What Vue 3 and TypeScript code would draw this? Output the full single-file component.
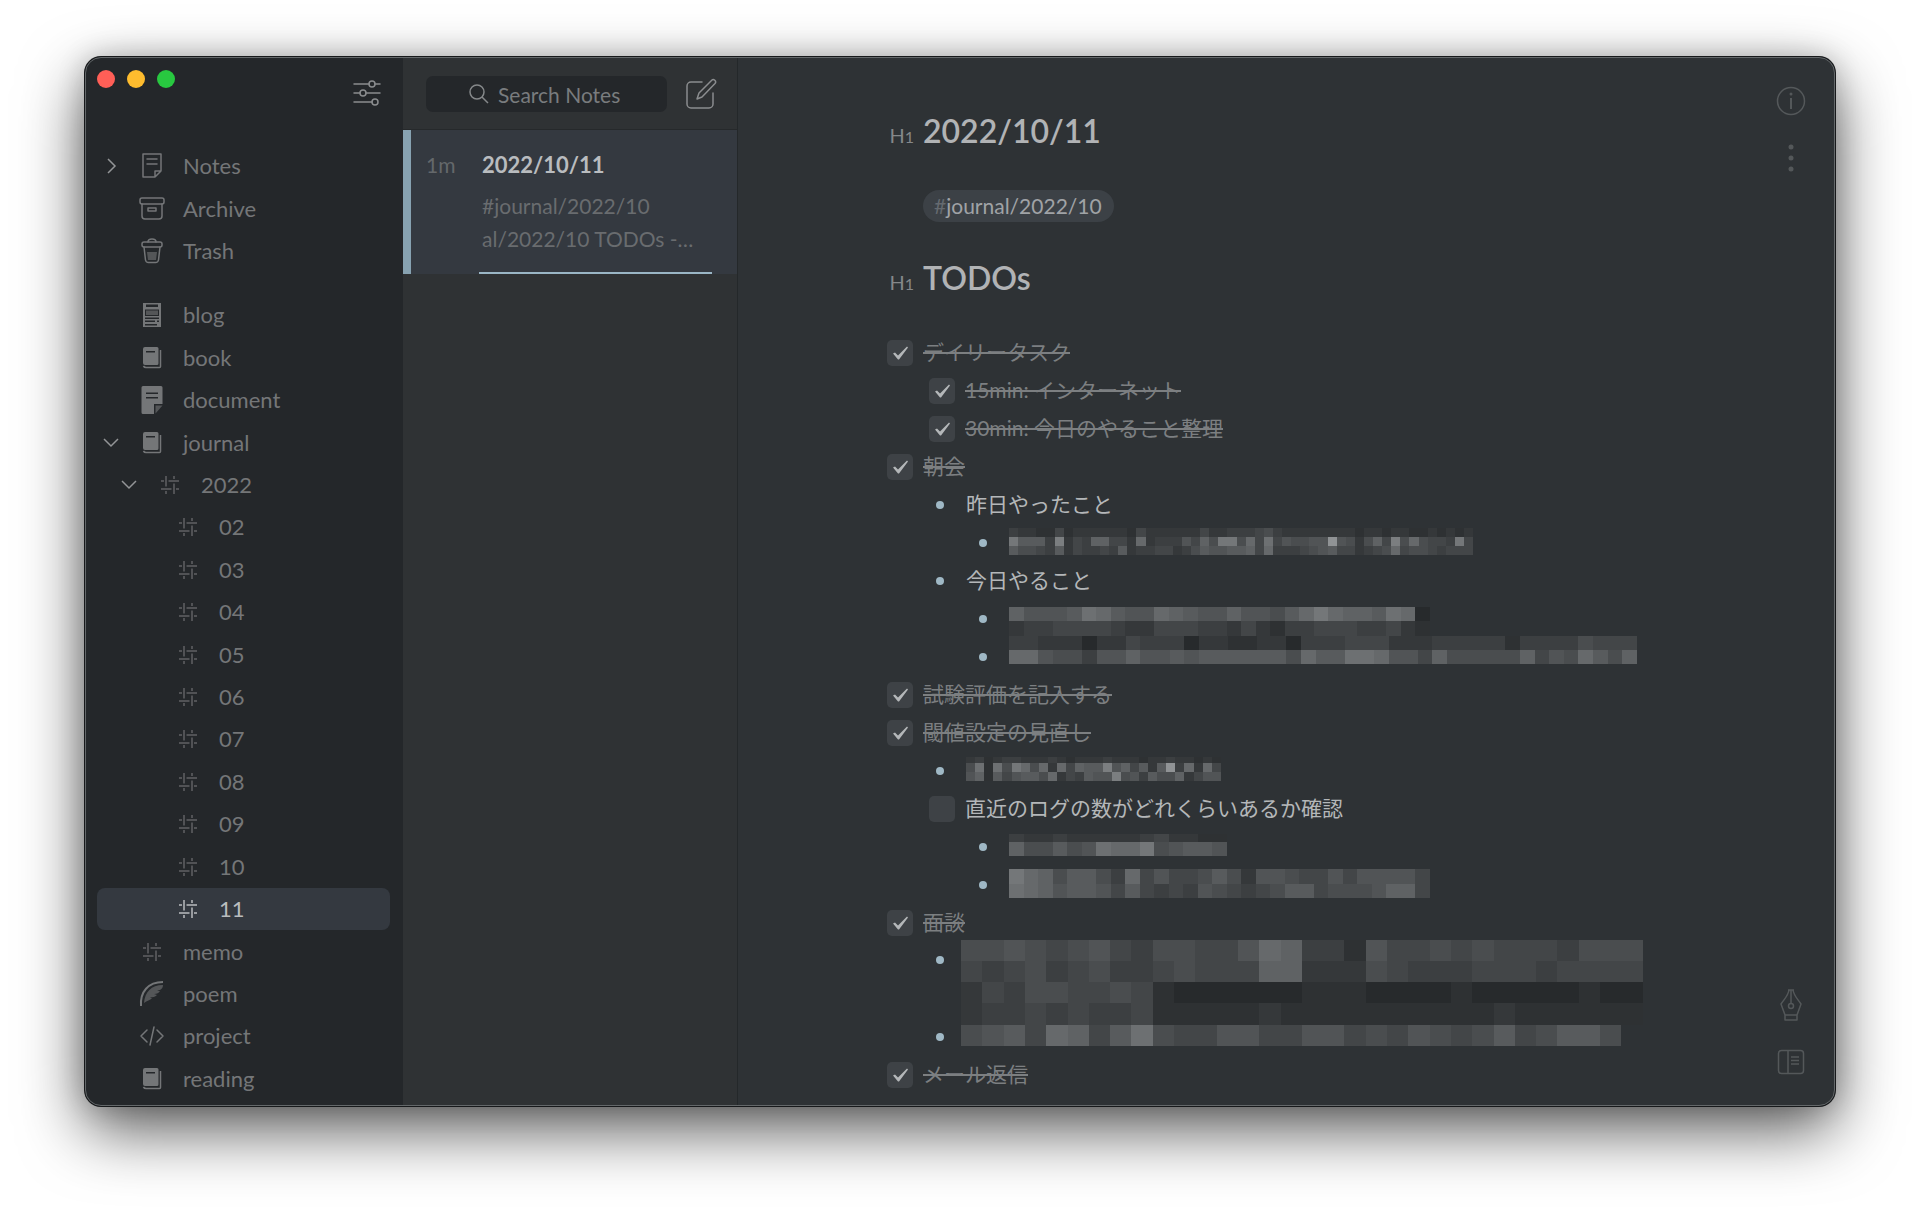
<script setup lang="ts">
import { ref } from 'vue'

type IconName = 'note' | 'archive' | 'trash' | 'blog' | 'book' | 'document' | 'hash' | 'feather' | 'code'

interface SidebarRow {
  label: string
  icon: IconName
  level: 0 | 1 | 2
  toggle?: 'open' | 'closed'
  selected?: boolean
}

interface MosaicBand {
  height: number
  cells: string
}

interface Mosaic {
  cell: number
  bands: MosaicBand[]
  align: 'end' | 'start' | 'center' | 'wide'
}

interface NoteLine {
  kind: 'todo' | 'bullet'
  level: 0 | 1 | 2
  text?: string
  done?: boolean
  mosaic?: Mosaic
  tall?: boolean
}

const systemRows: SidebarRow[] = [
  { label: 'Notes', icon: 'note', level: 0, toggle: 'closed' },
  { label: 'Archive', icon: 'archive', level: 0 },
  { label: 'Trash', icon: 'trash', level: 0 },
]

const months = ['02', '03', '04', '05', '06', '07', '08', '09', '10', '11']

const tagRows: SidebarRow[] = [
  { label: 'blog', icon: 'blog', level: 0 },
  { label: 'book', icon: 'book', level: 0 },
  { label: 'document', icon: 'document', level: 0 },
  { label: 'journal', icon: 'book', level: 0, toggle: 'open' },
  { label: '2022', icon: 'hash', level: 1, toggle: 'open' },
  ...months.map((m): SidebarRow => ({ label: m, icon: 'hash', level: 2, selected: m === '11' })),
  { label: 'memo', icon: 'hash', level: 0 },
  { label: 'poem', icon: 'feather', level: 0 },
  { label: 'project', icon: 'code', level: 0 },
  { label: 'reading', icon: 'book', level: 0 },
]

const sections = [
  { name: 'Library', rows: systemRows },
  { name: 'Tags', rows: tagRows },
]

const lines = ref<NoteLine[]>([
  { kind: 'todo', level: 0, text: 'デイリータスク', done: true },
  { kind: 'todo', level: 1, text: '15min: インターネット', done: true },
  { kind: 'todo', level: 1, text: '30min: 今日のやること整理', done: true },
  { kind: 'todo', level: 0, text: '朝会', done: true },
  { kind: 'bullet', level: 1, text: '昨日やったこと' },
  {
    kind: 'bullet',
    level: 2,
    mosaic: {
      cell: 9.1,
      align: 'center',
      bands: [
        { height: 9, cells: '322114122222214222222422333453222222221221221121212' },
        { height: 9, cells: 'b7773c24388442923336485bb594a465566f652584c595443b4' },
        { height: 9, cells: '755437243343723344235766778493334567442345945543444' },
      ],
    },
  },
  { kind: 'bullet', level: 1, text: '今日やること' },
  {
    kind: 'bullet',
    level: 2,
    mosaic: {
      cell: 14.5,
      align: 'end',
      bands: [
        { height: 14, cells: '86667a976698766866579b9887a90' },
        { height: 15, cells: '23344443224443324213344433421' },
      ],
    },
  },
  {
    kind: 'bullet',
    level: 2,
    mosaic: {
      cell: 14.6,
      align: 'start',
      bands: [
        { height: 14, cells: '3322202243330221122033344422233333133335444' },
        { height: 14, cells: '99655366866767777775977aa966485555584659758' },
      ],
    },
  },
  { kind: 'todo', level: 0, text: '試験評価を記入する', done: true },
  { kind: 'todo', level: 0, text: '閾値設定の見直し', done: true },
  {
    kind: 'bullet',
    level: 1,
    mosaic: {
      cell: 9.1,
      align: 'center',
      bands: [
        { height: 6, cells: '2312332223212223222122322121' },
        { height: 9, cells: '5a1a5b959294877c684727f39294' },
        { height: 9, cells: '6817467759243766c56375582466' },
      ],
    },
  },
  { kind: 'todo', level: 1, text: '直近のログの数がどれくらいあるか確認', done: false },
  {
    kind: 'bullet',
    level: 2,
    mosaic: {
      cell: 14.5,
      align: 'center',
      bands: [
        { height: 8, cells: '322322222342211' },
        { height: 14, cells: '855756a99b56776' },
      ],
    },
  },
  {
    kind: 'bullet',
    level: 2,
    mosaic: {
      cell: 14.5,
      align: 'center',
      bands: [
        { height: 15, cells: 'b9857753946445752665446466664' },
        { height: 14, cells: 'a9867764743436543457745556884' },
      ],
    },
  },
  { kind: 'todo', level: 0, text: '面談', done: true },
  {
    kind: 'bullet',
    level: 1,
    tall: true,
    mosaic: {
      cell: 21.3,
      align: 'wide',
      bands: [
        { height: 21, cells: '55654564355446983316445454443555' },
        { height: 21, cells: '43453453345444882225433344434444' },
        { height: 21, cells: '24355445410000001110000100000100' },
        { height: 22, cells: '23343433411111211111111112111111' },
      ],
    },
  },
  {
    kind: 'bullet',
    level: 1,
    mosaic: {
      cell: 21.3,
      align: 'wide',
      bands: [{ height: 21, cells: '56749847a5446644664546545745775' }],
    },
  },
  { kind: 'todo', level: 0, text: 'メール返信', done: true },
])

function shade(digit: string): string {
  const v = parseInt(digit, 16)
  const g = 39 + v * 7
  return `rgb(${g}, ${g + 3}, ${g + 5})`
}

function bandTop(bands: MosaicBand[], index: number): number {
  return bands.slice(0, index).reduce((sum, b) => sum + b.height, 0)
}

function mosaicWidth(m: Mosaic): number {
  return Math.round(m.cell * Math.max(...m.bands.map((b) => b.cells.length)))
}

function mosaicHeight(m: Mosaic): number {
  return bandTop(m.bands, m.bands.length)
}
</script>

<template>
  <div class="desktop">
    <main class="window">
      <aside class="sidebar">
        <header class="sidebar-head">
          <div class="lights">
            <button class="light light-close" aria-label="Close"></button>
            <button class="light light-min" aria-label="Minimize"></button>
            <button class="light light-max" aria-label="Zoom"></button>
          </div>
          <button class="icon-button" aria-label="Preferences">
            <svg width="28" height="28" viewBox="0 0 28 28" class="line-icon">
              <path d="M1 5h15M22 5h5M1 14h6M13 14h14M1 23h18" />
              <circle cx="19" cy="5" r="3" />
              <circle cx="10" cy="14" r="3" />
              <circle cx="22" cy="23" r="3" />
            </svg>
          </button>
        </header>
        <nav class="tree" aria-label="Tags">
          <template v-for="section in sections" :key="section.name">
            <div v-for="row in section.rows" :key="row.label" class="row" :class="['level-' + row.level, { selected: row.selected }]">
              <button v-if="row.toggle" class="chevron" :aria-label="'Toggle ' + row.label">
                <svg v-if="row.toggle === 'closed'" width="16" height="16" viewBox="0 0 16 16"><path d="M5 1l7 7-7 7" /></svg>
                <svg v-else width="16" height="16" viewBox="0 0 16 16"><path d="M1 4l7 7 7-7" /></svg>
              </button>
              <span v-else class="chevron"></span>
              <a class="row-link" href="#">
                <span class="row-icon">
                  <svg v-if="row.icon === 'note'" width="26" height="28" viewBox="0 0 26 28" class="line-icon">
                    <path d="M4 2h18v17l-6 6H4zM22 19h-6v6M8 7h10M8 12h10" />
                  </svg>
                  <svg v-else-if="row.icon === 'archive'" width="26" height="26" viewBox="0 0 26 26" class="line-icon">
                    <rect x="1" y="2" width="24" height="6" rx="2" />
                    <path d="M3 8v12a3 3 0 0 0 3 3h14a3 3 0 0 0 3-3V8" />
                    <rect x="9" y="12" width="8" height="3" />
                  </svg>
                  <svg v-else-if="row.icon === 'trash'" width="26" height="28" viewBox="0 0 26 28" class="line-icon">
                    <path d="M9 5c0-4 8-4 8 0" />
                    <rect x="3" y="5" width="20" height="5" rx="2" />
                    <path d="M5 10l1.500 13a3 3 0 0 0 3 2.500h7a3 3 0 0 0 3-2.500L21 10" />
                    <path d="M8 15h10l-1 8H9z" class="soft" />
                  </svg>
                  <svg v-else-if="row.icon === 'blog'" width="20" height="26" viewBox="0 0 20 26" class="solid-icon">
                    <path fill-rule="evenodd" d="M1 1h18v24H1zM4 2.500h12v2.500H4zM3 7.500v6.500h14V7.500zM3 15.500v1.500h14v-1.500zM3 18.500V20h10v-1.500zM3 22v1.500h12V22zM15 18.500V20h2v-1.500z" />
                    <rect x="4" y="8.500" width="12" height="4.500" opacity="0.6" />
                  </svg>
                  <svg v-else-if="row.icon === 'book'" width="20" height="24" viewBox="0 0 20 24" class="solid-icon">
                    <path fill-rule="evenodd" d="M3 1h12a1.500 1.500 0 0 1 1.500 1.500v15A1.500 1.500 0 0 1 15 19H3a2 2 0 0 1-2-2V3a2 2 0 0 1 2-2zM4 5v1.500h9V5z" />
                    <path d="M18.500 4v16.500a1 1 0 0 1-1 1H4c-1.200 0-2-.5-2.600-1.500" class="book-edge" />
                  </svg>
                  <svg v-else-if="row.icon === 'document'" width="22" height="28" viewBox="0 0 22 28" class="solid-icon">
                    <path fill-rule="evenodd" d="M2 0h18a1.500 1.500 0 0 1 1.500 1.500V18H13v10H2a1.500 1.500 0 0 1-1.500-1.500v-25A1.500 1.500 0 0 1 2 0zM5 6.500V8h12V6.500zM5 11v1.500h12V11z" />
                    <path d="M14.500 19.500h7l-7 8z" opacity="0.6" />
                  </svg>
                  <svg v-else-if="row.icon === 'hash'" width="20" height="20" viewBox="0 0 20 20" class="hash-icon">
                    <path d="M6 1v10.500M6 16v3M14 1v3M14 8.500V19M1 6h3M8.500 6H19M1 14h10.500M16 14h3" />
                  </svg>
                  <svg v-else-if="row.icon === 'feather'" width="26" height="28" viewBox="0 0 26 28">
                    <path d="M2 26C1 12 9 2 24 2" class="quill" />
                    <path d="M5 23C6 12 12 5 24 5c0 2-1 4-3 5l-3 .5 3 .8c-1 1.700-3 2.500-6 2.700l3 1c-2 1.800-4 2.500-7 2.500l2 1c-2 1.500-5 2-8 4.500z" class="vane" />
                  </svg>
                  <svg v-else width="26" height="20" viewBox="0 0 26 20" class="line-icon">
                    <path d="M8 4L2 10l6 6M18 4l6 6-6 6M15 1l-4 18" />
                  </svg>
                </span>
                <span>{{ row.label }}</span>
              </a>
            </div>
            <div v-if="section.name === 'Library'" class="tree-gap"></div>
          </template>
        </nav>
      </aside>

      <section class="list">
        <header class="list-head">
          <label class="search">
            <svg width="20" height="20" viewBox="0 0 20 20" class="search-icon"><circle cx="8" cy="8" r="7" /><path d="M13 13l6 6" /></svg>
            <input type="search" placeholder="Search Notes" aria-label="Search Notes" />
          </label>
          <button class="icon-button compose" aria-label="New note">
            <svg width="32" height="32" viewBox="0 0 32 32" class="line-icon">
              <path d="M17 4H6a4 4 0 0 0-4 4v18a4 4 0 0 0 4 4h18a4 4 0 0 0 4-4V15" />
              <path d="M12 21l2-6L27 2c1.500-1.500 5 1 3 3.500L17 19z" />
            </svg>
          </button>
        </header>
        <article class="card">
          <time class="age">1m</time>
          <div class="card-body">
            <h2 class="card-title">2022/10/11</h2>
            <p class="card-text">#journal/2022/10<br />al/2022/10 TODOs -…</p>
          </div>
        </article>
      </section>

      <section class="editor">
        <div class="doc">
          <h1 class="heading"><span class="marker">H<small>1</small></span>2022/10/11</h1>
          <a class="tag" href="#"><span class="tag-hash">#</span>journal/2022/10</a>
          <h1 class="heading"><span class="marker">H<small>1</small></span>TODOs</h1>
          <ul class="lines">
            <li v-for="(line, i) in lines" :key="i" class="line" :class="['depth-' + line.level, { tall: line.tall }]">
              <label v-if="line.kind === 'todo'" class="todo">
                <input v-model="line.done" type="checkbox" class="check" />
                <span :class="{ struck: line.done }">{{ line.text }}</span>
              </label>
              <template v-else>
                <span class="bullet"></span>
                <span v-if="line.text">{{ line.text }}</span>
                <svg
                  v-else-if="line.mosaic"
                  class="mosaic"
                  :class="'mosaic-' + line.mosaic.align"
                  :width="mosaicWidth(line.mosaic)"
                  :height="mosaicHeight(line.mosaic)"
                  shape-rendering="crispEdges"
                  aria-label="Hidden text"
                >
                  <g v-for="(band, b) in line.mosaic.bands" :key="b">
                    <rect
                      v-for="(c, x) in band.cells.split('')"
                      :key="x"
                      :x="Math.round(x * line.mosaic.cell)"
                      :y="bandTop(line.mosaic.bands, b)"
                      :width="Math.round((x + 1) * line.mosaic.cell) - Math.round(x * line.mosaic.cell)"
                      :height="band.height"
                      :fill="shade(c)"
                    />
                  </g>
                </svg>
              </template>
            </li>
          </ul>
        </div>
        <div class="rail">
          <button class="icon-button" aria-label="Note info">
            <svg width="30" height="30" viewBox="0 0 30 30" class="rail-icon"><circle cx="15" cy="15" r="13.500" /><path d="M15 12v11" class="thick" /><circle cx="15" cy="8" r="1.500" class="dot" /></svg>
          </button>
          <button class="icon-button more" aria-label="More">
            <svg width="6" height="28" viewBox="0 0 6 28" class="rail-icon"><circle cx="3" cy="3" r="2.500" class="dot" /><circle cx="3" cy="14" r="2.500" class="dot" /><circle cx="3" cy="25" r="2.500" class="dot" /></svg>
          </button>
          <button class="icon-button pen" aria-label="Style">
            <svg width="24" height="34" viewBox="0 0 24 34" class="rail-icon"><path d="M9 2h6M10 2c-1 6-4 8-8 14l4 11h12l4-11C18 10 15 8 14 2M12 2v13M6 32v-5h12v5z" /><circle cx="12" cy="18" r="2.500" /></svg>
          </button>
          <button class="icon-button" aria-label="Toggle panels">
            <svg width="28" height="26" viewBox="0 0 28 26" class="rail-icon"><rect x="1.500" y="1.500" width="25" height="23" rx="3" /><path d="M11 1.500v23M14 8h8M14 11.500h8M14 15h8" /></svg>
          </button>
        </div>
      </section>
    </main>
  </div>
</template>

<style>
body {
  margin: 0;
  background: #fff;
}
</style>

<style scoped>
* {
  box-sizing: border-box;
}

.desktop {
  min-height: 100vh;
  padding: 57px 85px 112px;
  display: flex;
  background: #fff;
  font-family: Lato, "Noto Sans CJK JP", sans-serif;
  font-size: 21px;
  color: #b4b7b9;
}

.window {
  position: relative;
  flex: 1;
  display: grid;
  grid-template-columns: 318px 335px minmax(0, 1fr);
  border-radius: 16px;
  overflow: hidden;
  background: #2e3235;
  box-shadow: 0 0 0 1px #17191b, 0 24px 64px rgba(0, 0, 0, 0.65), 0 0 28px rgba(0, 0, 0, 0.2);
}

.window::after {
  content: "";
  position: absolute;
  inset: 0;
  border: 1px solid #64686a;
  border-radius: 16px;
  pointer-events: none;
}

button {
  padding: 0;
  border: 0;
  background: none;
  color: inherit;
  font: inherit;
}

svg {
  display: block;
}

.icon-button {
  display: block;
}

.line-icon {
  fill: none;
  stroke: currentColor;
  stroke-width: 1.5;
  stroke-linecap: round;
  stroke-linejoin: round;
}

.solid-icon {
  fill: currentColor;
}

.book-edge {
  fill: none;
  stroke: currentColor;
  stroke-width: 1.5;
}

.soft,
.vane {
  fill: currentColor;
  stroke: none;
  opacity: 0.6;
}

.quill {
  fill: none;
  stroke: currentColor;
  stroke-width: 2;
}

.hash-icon {
  fill: none;
  stroke: currentColor;
  stroke-width: 1.5;
  opacity: 0.75;
}

/* Sidebar */
.sidebar {
  display: flex;
  flex-direction: column;
  padding: 0 13px 6px 12px;
  background: #24272a;
  color: #747678;
}

.sidebar-head {
  height: 88px;
  display: flex;
  justify-content: space-between;
  align-items: flex-start;
  padding: 13px 9px 0 0;
  color: #8b8d8f;
}

.sidebar-head .icon-button {
  margin-top: 9px;
}

.lights {
  display: flex;
  gap: 12px;
}

.light {
  width: 18px;
  height: 18px;
  border-radius: 50%;
}

.light-close {
  background: #ff5f57;
}

.light-min {
  background: #febc2e;
}

.light-max {
  background: #28c840;
}

.tree {
  flex: 1;
  display: flex;
  flex-direction: column;
  font-size: 22px;
}

.tree-gap {
  height: 22px;
}

.row {
  flex: 1 1 0;
  min-height: 36px;
  display: flex;
  align-items: center;
  border-radius: 8px;
}

.level-1 {
  padding-left: 18px;
}

.level-2 {
  padding-left: 36px;
}

.selected {
  background: #343940;
  color: #b9bcbe;
}

.selected .hash-icon {
  opacity: 1;
}

.chevron {
  width: 28px;
  display: flex;
  justify-content: center;
}

.chevron svg {
  fill: none;
  stroke: #939597;
  stroke-width: 1.5;
}

.row-link {
  flex: 1;
  display: flex;
  align-items: center;
  line-height: 26px;
  color: inherit;
  text-decoration: none;
}

.row-icon {
  width: 53px;
  margin-right: 5px;
  display: flex;
  justify-content: center;
}

/* Note list */
.list {
  border-right: 1px solid #24282a;
  background: #2f3234;
}

.list-head {
  height: 73px;
  display: flex;
  align-items: flex-start;
  gap: 18px;
  padding: 19px 20px 0 23px;
  border-bottom: 1px solid #26292b;
}

.search {
  flex: 1;
  height: 36px;
  display: flex;
  align-items: center;
  gap: 9px;
  padding-left: 43px;
  border-radius: 7px;
  background: #24272a;
  color: #85888a;
}

.search-icon {
  flex: none;
  fill: none;
  stroke: currentColor;
  stroke-width: 1.5;
}

.search input {
  width: 100%;
  padding: 0;
  border: 0;
  outline: 0;
  background: none;
  color: inherit;
  font: inherit;
}

.search input::placeholder {
  color: #797c7e;
  opacity: 1;
}

.compose {
  margin-top: 2px;
  color: #8b8d8f;
}

.card {
  height: 144px;
  display: flex;
  padding: 18px 24px 0 15px;
  border-left: 8px solid #87a2b1;
  background: #343940;
  line-height: 34px;
}

.age {
  width: 53px;
  color: #64686b;
}

.card-body {
  flex: 1;
  margin-right: 1px;
  padding-left: 3px;
  border-bottom: 2px solid #9ab6c5;
}

.card-title {
  margin: 0 0 7px;
  font-size: 22px;
  font-weight: 700;
  color: #b9bcbf;
}

.card-text {
  margin: 0;
  line-height: 33px;
  color: #696c6f;
  white-space: nowrap;
}

/* Editor */
.editor {
  display: flex;
  justify-content: space-between;
}

.doc {
  padding: 54px 0 0 149px;
}

.heading {
  display: flex;
  align-items: baseline;
  margin: 0;
  font-size: 32px;
  font-weight: 600;
  line-height: 40px;
  color: #b1b3b5;
}

.marker {
  width: 36px;
  padding-right: 9px;
  text-align: right;
  font-size: 20px;
  font-weight: 400;
  line-height: 20px;
  color: #85888a;
}

.marker small {
  font-size: 16px;
}

.tag {
  width: fit-content;
  display: block;
  margin: 39px 0 36px 36px;
  padding: 0 12px 0 11px;
  border-radius: 16px;
  background: #3c4146;
  line-height: 32px;
  color: #a0a3a6;
  text-decoration: none;
}

.tag-hash {
  color: #656a70;
}

.lines {
  margin: 34px 0 0;
  padding: 0;
  list-style: none;
}

.line {
  height: 38px;
  display: flex;
  align-items: center;
  white-space: nowrap;
}

.tall {
  height: 76px;
  align-items: flex-start;
}

.depth-1 {
  padding-left: 42px;
}

.depth-2 {
  padding-left: 85px;
}

.todo {
  display: flex;
  align-items: center;
}

.check {
  appearance: none;
  width: 26px;
  height: 26px;
  margin: 3px 10px 0 0;
  border-radius: 5px;
  background: #3e4246;
}

.check:checked::before {
  content: "";
  display: block;
  width: 26px;
  height: 26px;
  background: #b4b7b9;
  clip-path: polygon(6px 14px, 8px 13px, 11px 16px, 20px 7px, 21px 8px, 12px 20px, 11px 20px);
}

.struck {
  color: #7c7f81;
  text-decoration: line-through;
  text-decoration-thickness: 2px;
}

.bullet {
  flex: none;
  width: 8px;
  height: 8px;
  margin: 3px 22px 0 7px;
  border-radius: 50%;
  background: #9fb8c5;
}

.tall .bullet {
  margin-top: 16px;
}

.mosaic {
  flex: none;
}

.mosaic-start {
  align-self: flex-start;
}

.mosaic-end {
  align-self: flex-end;
}

.mosaic-wide {
  margin-left: -5px;
}

/* Right rail */
.rail {
  width: 88px;
  display: flex;
  flex-direction: column;
  align-items: center;
  padding: 29px 0 31px;
  color: #54585a;
}

.rail-icon {
  fill: none;
  stroke: currentColor;
  stroke-width: 1.5;
  stroke-linejoin: round;
}

.rail-icon .thick {
  stroke-width: 2;
}

.rail-icon .dot {
  fill: currentColor;
  stroke: none;
}

.more {
  margin-top: 28px;
}

.pen {
  margin-top: auto;
  margin-bottom: 27px;
}
</style>
